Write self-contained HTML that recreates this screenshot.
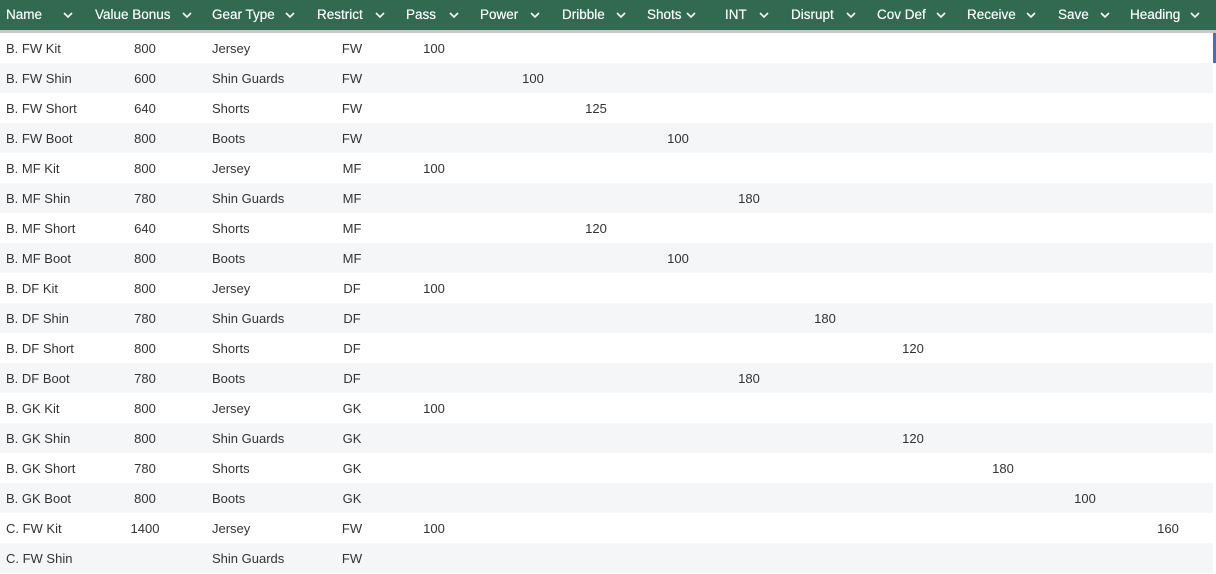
<!DOCTYPE html>
<html><head><meta charset="utf-8"><style>
*{margin:0;padding:0;box-sizing:border-box}
body{width:1216px;height:574px;overflow:hidden;background:#fff;font-family:"Liberation Sans",Arial,sans-serif;position:relative}
#hd{position:absolute;left:0;top:0;width:1216px;height:30px;background:#316a50}
#sh{position:absolute;left:0;top:30px;width:1216px;height:3px;background:#c8c8c8}
.h{position:absolute;top:7px;color:#fff;font-size:13.5px;white-space:nowrap;text-shadow:0 0 0.4px #fff}
.c{position:absolute;top:9px;width:12px;height:12px}
.r{position:absolute;left:0;width:1213px;height:30px}
.r.g{background:#f5f6f8}
.t{position:absolute;font-size:13px;color:#333;white-space:nowrap;line-height:30px;margin-top:1px}
.m{transform:translateX(-50%)}
</style></head><body>
<div id="hd"></div><div id="sh"></div>
<div style="position:absolute;left:1213px;top:33px;width:3px;height:30px;background:#3a6fd8"></div>
<script>
var H=[["Name",6,68],["Value Bonus",95,187],["Gear Type",212,290],["Restrict",317,380],["Pass",406,454],["Power",480,535],["Dribble",562,621],["Shots",647,691],["INT",725,764],["Disrupt",791,851],["Cov Def",877,941],["Receive",967,1031],["Save",1058,1105],["Heading",1130,1195]];
var s="";
H.forEach(function(h){s+='<div class="h" style="left:'+h[1]+'px">'+h[0]+'</div><svg class="c" style="left:'+(h[2]-6)+'px" viewBox="0 0 12 12"><path d="M2 4l4 4 4-4" fill="none" stroke="#fff" stroke-width="1.6"/></svg>';});
var cx=[434,533,596,678,749,825,913,1003,1085,1168];
var R=[["B. FW Kit","800","Jersey","FW",0,"100"],["B. FW Shin","600","Shin Guards","FW",1,"100"],["B. FW Short","640","Shorts","FW",2,"125"],["B. FW Boot","800","Boots","FW",3,"100"],["B. MF Kit","800","Jersey","MF",0,"100"],["B. MF Shin","780","Shin Guards","MF",4,"180"],["B. MF Short","640","Shorts","MF",2,"120"],["B. MF Boot","800","Boots","MF",3,"100"],["B. DF Kit","800","Jersey","DF",0,"100"],["B. DF Shin","780","Shin Guards","DF",5,"180"],["B. DF Short","800","Shorts","DF",6,"120"],["B. DF Boot","780","Boots","DF",4,"180"],["B. GK Kit","800","Jersey","GK",0,"100"],["B. GK Shin","800","Shin Guards","GK",6,"120"],["B. GK Short","780","Shorts","GK",7,"180"],["B. GK Boot","800","Boots","GK",8,"100"],["C. FW Kit","1400","Jersey","FW",0,"100",9,"160"],["C. FW Shin","","Shin Guards","FW"]];
R.forEach(function(r,i){var y=33+i*30;
s+='<div class="r'+(i%2?' g':'')+'" style="top:'+y+'px"></div>';
s+='<div class="t" style="left:6px;top:'+y+'px">'+r[0]+'</div>';
s+='<div class="t m" style="left:145px;top:'+y+'px">'+r[1]+'</div>';
s+='<div class="t" style="left:212px;top:'+y+'px">'+r[2]+'</div>';
s+='<div class="t m" style="left:352px;top:'+y+'px">'+r[3]+'</div>';
for(var k=4;k<r.length;k+=2)s+='<div class="t m" style="left:'+cx[r[k]]+'px;top:'+y+'px">'+r[k+1]+'</div>';
});
document.write(s);
</script>
</body></html>
